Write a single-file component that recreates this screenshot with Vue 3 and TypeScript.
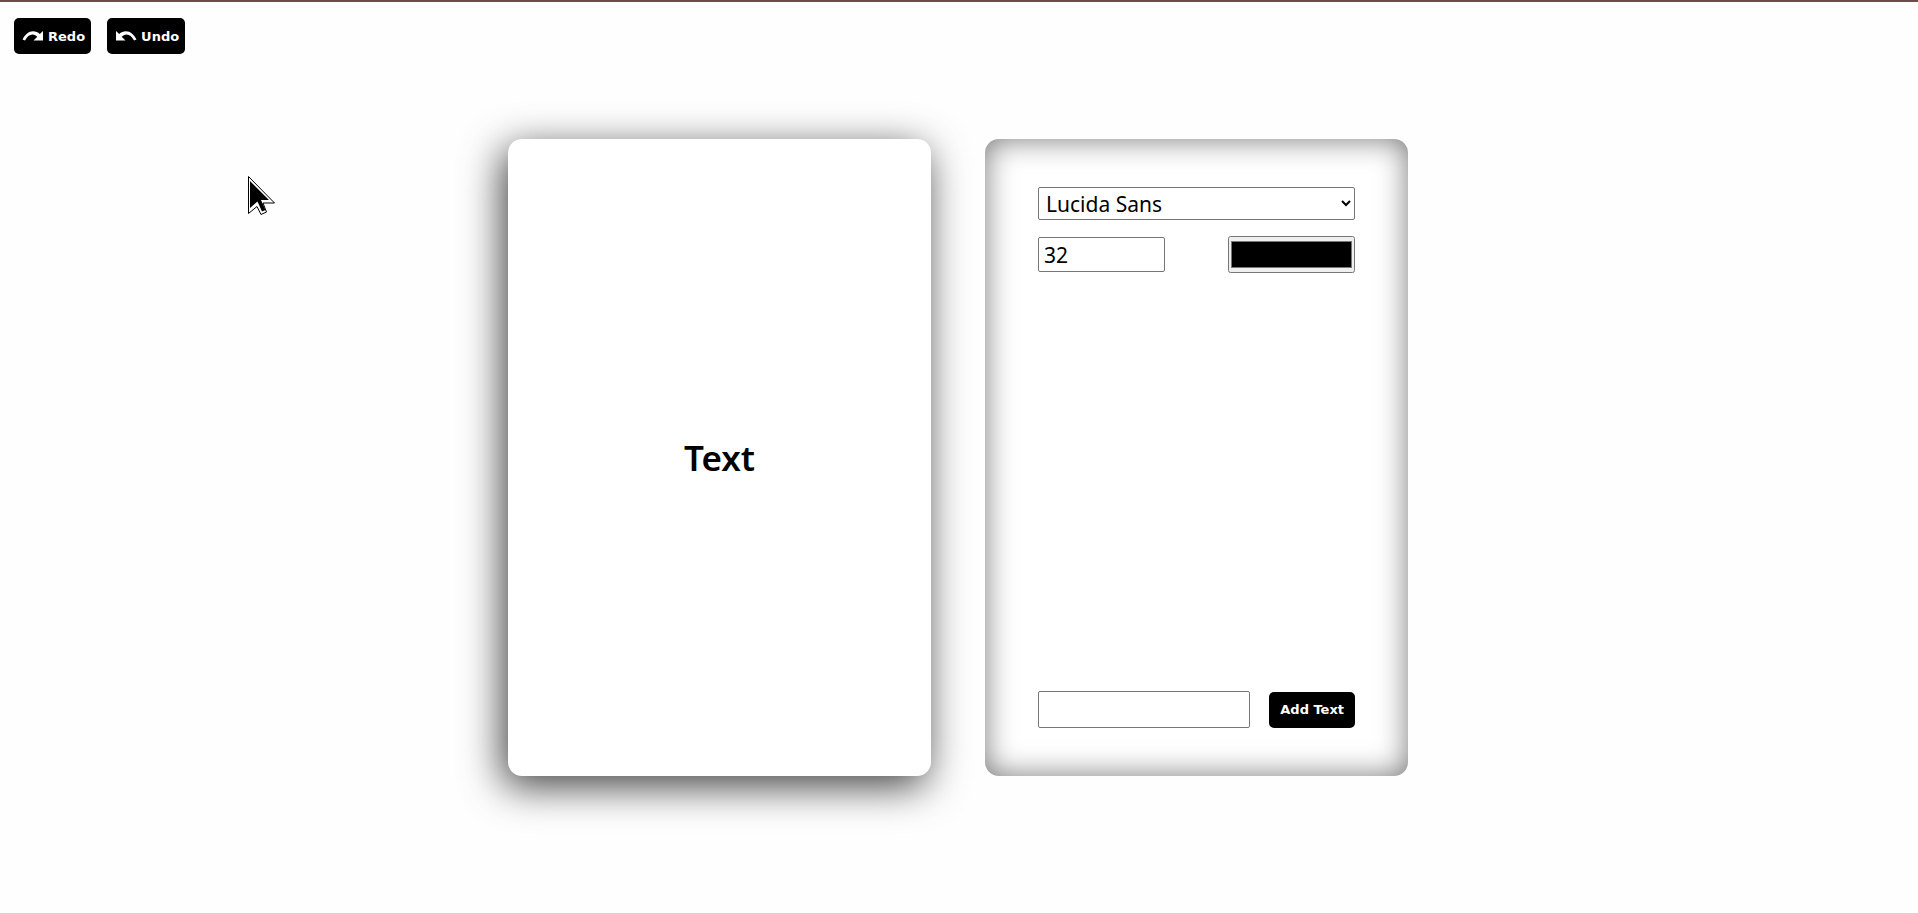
<script setup lang="ts">
import { ref } from 'vue'

const fonts = ['Lucida Sans', 'Arial', 'Times New Roman', 'Courier New']
const font = ref('Lucida Sans')
const size = ref(32)
const color = ref('#000000')
const draft = ref('')
const text = ref('Text')

function addText() {
  if (draft.value) text.value = draft.value
  draft.value = ''
}
</script>

<template>
  <div class="app">
    <header class="toolbar">
      <button type="button" class="btn">
        <svg class="icon" viewBox="0 0 22 10" aria-hidden="true">
          <path d="M0.500 8.600C3 3.400 6.800 0.300 11 0.300c2.700 0 5 1 6.800 2.700L21 0v9.500h-9.500l3.800-3.700C14 4.400 12.500 3.400 10.500 3.400 7.500 3.400 5 5.500 3 9.600z" />
        </svg>
        <span>Redo</span>
      </button>
      <button type="button" class="btn">
        <svg class="icon" viewBox="0 0 22 10" aria-hidden="true">
          <path d="M21.500 8.600C19 3.400 15.200 0.300 11 0.300c-2.700 0-5 1-6.800 2.700L1 0v9.500h9.500L6.700 5.800C8 4.400 9.500 3.400 11.500 3.400c3 0 5.500 2.100 7.500 6.200z" />
        </svg>
        <span>Undo</span>
      </button>
    </header>
    <main class="stage">
      <section class="card" aria-label="Canvas">
        <p class="sample">{{ text }}</p>
      </section>
      <form class="card panel" @submit.prevent="addText">
        <select v-model="font" class="field family" aria-label="Font family">
          <option v-for="f in fonts" :key="f">{{ f }}</option>
        </select>
        <div class="row">
          <input v-model="size" class="field size" type="number" aria-label="Font size" />
          <input v-model="color" class="color" type="color" aria-label="Text color" />
        </div>
        <div class="row bottom">
          <input v-model="draft" class="field draft" type="text" aria-label="New text" />
          <button type="submit" class="btn add">Add Text</button>
        </div>
      </form>
    </main>
    <svg class="cursor" viewBox="0 0 28 39" aria-hidden="true">
      <path class="edge" d="M0.500 0.500V37.500L9 30.500L13 38.500L18.500 36L15 27H26.500z" />
      <path d="M2 5V32L9.500 25.500L14 35.500L17.500 34L13 24H21z" />
    </svg>
  </div>
</template>

<style>
body {
  margin: 0;
  background: #fefefe;
}
</style>

<style scoped>
.app {
  position: relative;
  box-sizing: border-box;
  min-height: 100vh;
  border-top: 2px solid #6f4c4b;
  font-family: "Noto Sans", "Open Sans", sans-serif;
  color: #000;
}
.toolbar {
  display: flex;
  gap: 16px;
  padding: 16px 14px 0;
}
.btn {
  display: flex;
  align-items: center;
  justify-content: center;
  gap: 4px;
  box-sizing: border-box;
  height: 36px;
  padding: 0 6px 0 8px;
  border: 0;
  border-radius: 5px;
  background: #000;
  color: #fff;
  font: bold 13px "DejaVu Sans", "Noto Sans", sans-serif;
  white-space: nowrap;
}
.icon {
  width: 22px;
  height: 10px;
  fill: #fff;
}
.stage {
  display: flex;
  justify-content: center;
  gap: 54px;
  padding: 85px 2px 0 0;
}
.card {
  display: flex;
  align-items: center;
  justify-content: center;
  box-sizing: border-box;
  width: 22.080%;
  aspect-ratio: 423 / 637;
  border-radius: 14px;
  background: #fff;
  box-shadow: -5px 10px 40px rgba(0, 0, 0, 0.75);
}
.sample {
  margin: 0;
  font-size: 35px;
  font-weight: 600;
  line-height: 46px;
}
.panel {
  flex-direction: column;
  align-items: stretch;
  justify-content: flex-start;
  padding: 48px 53px;
  box-shadow: inset 0 0 30px rgba(0, 0, 0, 0.54);
}
.row {
  display: flex;
  align-items: center;
  justify-content: space-between;
  margin-top: 16px;
}
.bottom {
  margin-top: auto;
}
.field {
  box-sizing: border-box;
  height: 35px;
  padding: 0 5px;
  border: 1px solid #767676;
  border-radius: 2px;
  background: #fff;
  color: #000;
  font: 21px "Noto Sans", "Open Sans", sans-serif;
}
.family {
  height: 33px;
  padding: 0 3px;
}
.size,
.color {
  width: 40%;
}
.size::-webkit-inner-spin-button {
  appearance: none;
}
.color {
  box-sizing: border-box;
  height: 37px;
  padding: 0 2px;
}
.color::-webkit-color-swatch-wrapper {
  padding: 4px 0;
}
.draft {
  width: 67%;
  height: 37px;
}
.add {
  padding: 0 11px;
}
.cursor {
  position: absolute;
  left: 248px;
  top: 174px;
  width: 28px;
  height: 39px;
}
.edge {
  fill: #fff;
  stroke: #000;
  stroke-width: 1;
}
</style>
